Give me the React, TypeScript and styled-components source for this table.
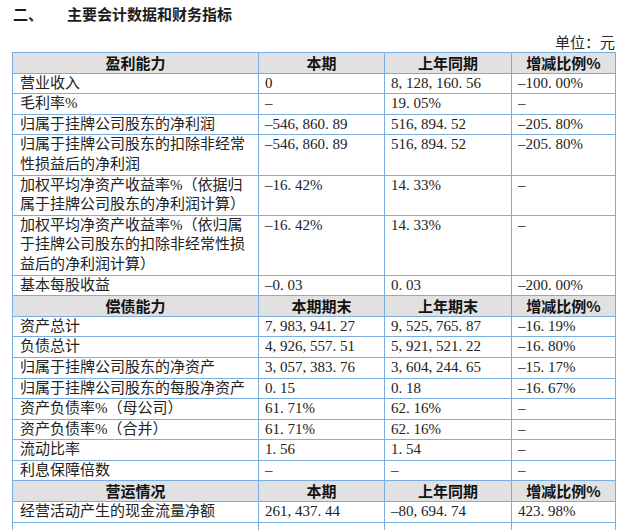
import React from "react";
import styled, { createGlobalStyle } from "styled-components";

const GlobalStyle = createGlobalStyle`
  html, body {
    margin: 0;
    padding: 0;
    overflow: hidden;
    background: #ffffff;
  }
  body {
    font-family: "Liberation Serif", "Noto Sans CJK SC", serif;
    color: #1c1c1c;
  }
`;

const Page = styled.div`
  padding: 4px 7px 0 12px;
  width: 603px;
`;

const Title = styled.h2`
  margin: 0;
  font-family: "Noto Sans CJK SC", sans-serif;
  font-size: 15px;
  line-height: 20px;
  font-weight: 700;
  display: flex;
  padding-left: 1px;
`;

const TitleNo = styled.span`
  width: 54px;
`;

const Unit = styled.div`
  margin-top: 8px;
  font-size: 15px;
  line-height: 20px;
  text-align: right;
  font-family: "Noto Sans CJK SC", sans-serif;
  color: #2a2a2a;
`;

const Table = styled.table`
  width: 603px;
  border-collapse: collapse;
  table-layout: fixed;
  font-size: 15px;
`;

const Cell = styled.td<{ $first?: boolean }>`
  border: 1px solid #7aaee0;
  padding: 0 4px 0 ${(p) => (p.$first ? "7px" : "6px")};
  line-height: 19.6px;
  vertical-align: top;
  white-space: pre-line;
  overflow: hidden;
  color: #222;
`;

const HeadCell = styled.th`
  border: 1px solid #7aaee0;
  background: #e1e1e1;
  padding: 0;
  line-height: 19.6px;
  font-family: "Noto Sans CJK SC", sans-serif;
  font-weight: 700;
  text-align: center;
  color: #111;
`;

const Punct = styled.span`
  display: inline-block;
  width: 0.5em;
  text-align: left;
`;

const Dash = styled.span`
  display: inline-block;
  width: 0.5em;
  text-align: center;
`;

const Num: React.FC<{ v: string }> = ({ v }) => (
  <>
    {v.split("").map((c, i) =>
      c === "," || c === "." ? (
        <Punct key={i}>{c}</Punct>
      ) : c === "-" ? (
        <Dash key={i}>–</Dash>
      ) : (
        <React.Fragment key={i}>{c}</React.Fragment>
      )
    )}
  </>
);

type Row =
  | { kind: "head"; cols: [string, string, string, string] }
  | { kind: "data"; cols: [string, string, string, string] };

const rows: Row[] = [
  { kind: "head", cols: ["盈利能力", "本期", "上年同期", "增减比例%"] },
  { kind: "data", cols: ["营业收入", "0", "8,128,160.56", "-100.00%"] },
  { kind: "data", cols: ["毛利率%", "-", "19.05%", "-"] },
  { kind: "data", cols: ["归属于挂牌公司股东的净利润", "-546,860.89", "516,894.52", "-205.80%"] },
  {
    kind: "data",
    cols: ["归属于挂牌公司股东的扣除非经常\n性损益后的净利润", "-546,860.89", "516,894.52", "-205.80%"],
  },
  {
    kind: "data",
    cols: ["加权平均净资产收益率%（依据归\n属于挂牌公司股东的净利润计算）", "-16.42%", "14.33%", "-"],
  },
  {
    kind: "data",
    cols: [
      "加权平均净资产收益率%（依归属\n于挂牌公司股东的扣除非经常性损\n益后的净利润计算）",
      "-16.42%",
      "14.33%",
      "-",
    ],
  },
  { kind: "data", cols: ["基本每股收益", "-0.03", "0.03", "-200.00%"] },
  { kind: "head", cols: ["偿债能力", "本期期末", "上年期末", "增减比例%"] },
  { kind: "data", cols: ["资产总计", "7,983,941.27", "9,525,765.87", "-16.19%"] },
  { kind: "data", cols: ["负债总计", "4,926,557.51", "5,921,521.22", "-16.80%"] },
  { kind: "data", cols: ["归属于挂牌公司股东的净资产", "3,057,383.76", "3,604,244.65", "-15.17%"] },
  { kind: "data", cols: ["归属于挂牌公司股东的每股净资产", "0.15", "0.18", "-16.67%"] },
  { kind: "data", cols: ["资产负债率%（母公司）", "61.71%", "62.16%", "-"] },
  { kind: "data", cols: ["资产负债率%（合并）", "61.71%", "62.16%", "-"] },
  { kind: "data", cols: ["流动比率", "1.56", "1.54", "-"] },
  { kind: "data", cols: ["利息保障倍数", "-", "-", "-"] },
  { kind: "head", cols: ["营运情况", "本期", "上年同期", "增减比例%"] },
  { kind: "data", cols: ["经营活动产生的现金流量净额", "261,437.44", "-80,694.74", "423.98%"] },
  { kind: "data", cols: ["", "", "", ""] },
];

export default function App() {
  return (
    <>
      <GlobalStyle />
      <Page>
        <Title>
          <TitleNo>二、</TitleNo>
          <span>主要会计数据和财务指标</span>
        </Title>
        <Unit>单位：元</Unit>
        <Table>
          <colgroup>
            <col style={{ width: 246 }} />
            <col style={{ width: 126 }} />
            <col style={{ width: 127 }} />
            <col style={{ width: 104 }} />
          </colgroup>
          <tbody>
            {rows.map((r, i) =>
              r.kind === "head" ? (
                <tr key={i}>
                  {r.cols.map((c, j) => (
                    <HeadCell key={j}>{c}</HeadCell>
                  ))}
                </tr>
              ) : (
                <tr key={i}>
                  <Cell $first>{r.cols[0] || "\u00a0"}</Cell>
                  {r.cols.slice(1).map((c, j) => (
                    <Cell key={j}>
                      <Num v={c} />
                    </Cell>
                  ))}
                </tr>
              )
            )}
          </tbody>
        </Table>
      </Page>
    </>
  );
}
